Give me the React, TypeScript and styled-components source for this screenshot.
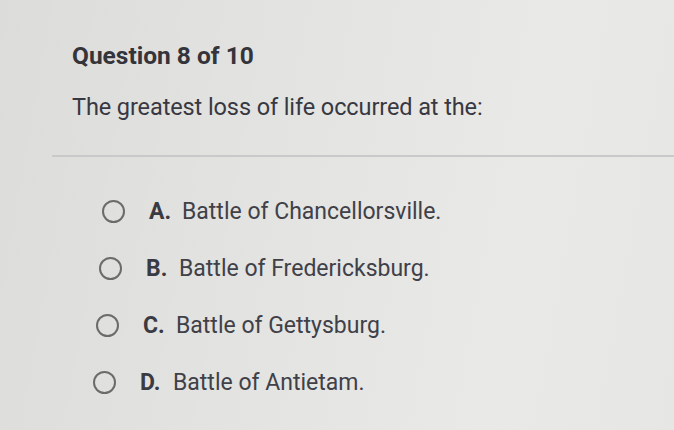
import styled, { createGlobalStyle } from 'styled-components';

const GlobalStyle = createGlobalStyle`
  html, body {
    margin: 0;
    padding: 0;
  }
  body {
    width: 674px;
    height: 430px;
    overflow: hidden;
    font-family: Roboto, "Liberation Sans", Arial, sans-serif;
    background: #e3e3e1;
  }
`;

const Page = styled.div`
  width: 674px;
  height: 430px;
  box-sizing: border-box;
  padding: 42px 0 0 52px;
  background: linear-gradient(100deg, #dcdcda 0%, #e3e3e1 40%, #e9e9e7 75%, #e6e6e4 100%);
`;

const Header = styled.div`
  padding-left: 20px;
  display: flex;
  flex-direction: column;
  gap: 23px;
`;

const Title = styled.h1`
  margin: 0;
  font-size: 24.5px;
  line-height: 28px;
  font-weight: 700;
  color: #34343a;
  letter-spacing: 0;
`;

const Prompt = styled.p`
  margin: 0;
  font-size: 23.5px;
  line-height: 28px;
  font-weight: 400;
  color: #383842;
  letter-spacing: -0.1px;
`;

const Divider = styled.hr`
  margin: 34px 0 0;
  border: none;
  height: 2px;
  background: #c9c9c9;
`;

const Options = styled.ul`
  list-style: none;
  margin: 0;
  padding: 40px 0 0 0;
  display: flex;
  flex-direction: column;
  gap: 29px;
`;

const Option = styled.li<{ $indent: number }>`
  display: flex;
  align-items: center;
  height: 28px;
  padding-left: ${(p) => p.$indent}px;
  font-size: 23px;
  color: #404048;
`;

const Radio = styled.span`
  width: 19px;
  height: 19px;
  border: 2px solid #6b6b6b;
  border-radius: 50%;
  flex-shrink: 0;
  margin-right: 24px;
`;

const Letter = styled.span`
  font-weight: 700;
  width: 33px;
  color: #3a3a42;
`;

const Answer = styled.span`
  letter-spacing: 0;
`;

const answers = [
  { letter: 'A.', text: 'Battle of Chancellorsville.' },
  { letter: 'B.', text: 'Battle of Fredericksburg.' },
  { letter: 'C.', text: 'Battle of Gettysburg.' },
  { letter: 'D.', text: 'Battle of Antietam.' },
];

const App = () => {
  return (
    <>
      <GlobalStyle />
      <Page>
        <Header>
          <Title>Question 8 of 10</Title>
          <Prompt>The greatest loss of life occurred at the:</Prompt>
        </Header>
        <Divider />
        <Options>
          {answers.map((a, i) => (
            <Option key={a.letter} $indent={50 - i * 3}>
              <Radio />
              <Letter>{a.letter}</Letter>
              <Answer>{a.text}</Answer>
            </Option>
          ))}
        </Options>
      </Page>
    </>
  );
};

export default App;
